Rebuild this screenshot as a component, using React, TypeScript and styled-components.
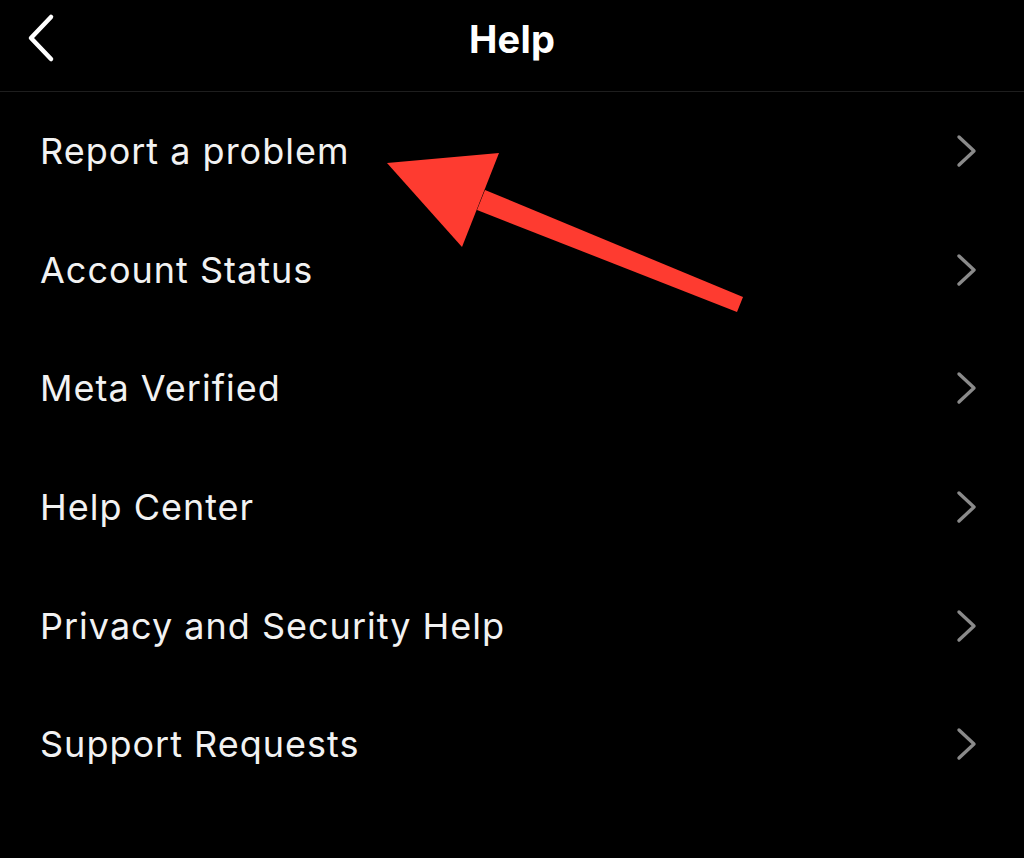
import React from 'react';
import styled, { createGlobalStyle } from 'styled-components';

const GlobalStyle = createGlobalStyle`
  html, body {
    margin: 0;
    padding: 0;
    background: #000;
  }
  body {
    font-family: Inter, "Noto Sans", "Liberation Sans", sans-serif;
    color: #f5f5f5;
  }
`;

const Screen = styled.div`
  position: relative;
  width: 1024px;
  height: 858px;
  background: #000;
  overflow: hidden;
`;

const Header = styled.div`
  position: relative;
  height: 91px;
  display: flex;
  align-items: center;
  justify-content: center;
  border-bottom: 1px solid #1e1e1e;
`;

const BackButton = styled.div`
  position: absolute;
  left: 26px;
  top: 12px;
  width: 30px;
  height: 52px;
  display: flex;
`;

const Title = styled.h1`
  margin: 0 0 14px;
  font-size: 38px;
  font-weight: 700;
  letter-spacing: 0.2px;
  color: #fff;
`;

const List = styled.div`
  display: flex;
  flex-direction: column;
`;

const Row = styled.div`
  height: 118.6px;
  display: flex;
  align-items: center;
  justify-content: space-between;
  padding: 0 46px 0 40px;
`;

const Label = styled.span`
  font-size: 36px;
  font-weight: 400;
  color: #f2f2f2;
  letter-spacing: 1px;
`;

const Chevron = styled.svg`
  width: 22px;
  height: 34px;
  display: block;
`;

const Arrow = styled.svg`
  position: absolute;
  left: 0;
  top: 0;
  pointer-events: none;
`;

const items = [
  'Report a problem',
  'Account Status',
  'Meta Verified',
  'Help Center',
  'Privacy and Security Help',
  'Support Requests',
];

function App() {
  return (
    <Screen>
      <GlobalStyle />
      <Header>
        <BackButton>
          <svg width="30" height="52" viewBox="0 0 30 52">
            <path d="M25 5 L5 26 L25 47" fill="none" stroke="#fff" strokeWidth="4.5" strokeLinecap="round" strokeLinejoin="round" />
          </svg>
        </BackButton>
        <Title>Help</Title>
      </Header>
      <List>
        {items.map(label => (
          <Row key={label}>
            <Label>{label}</Label>
            <Chevron viewBox="0 0 22 34">
              <path d="M3 3 L18 17 L3 31" fill="none" stroke="#8a8a8a" strokeWidth="3.4" strokeLinecap="round" strokeLinejoin="round" />
            </Chevron>
          </Row>
        ))}
      </List>
      <Arrow width="1024" height="858" viewBox="0 0 1024 858">
        <polygon points="387,163 499,153 462,247" fill="#fe3b30" />
        <polygon points="485,190 743,297 737,312 477,210" fill="#fe3b30" />
      </Arrow>
    </Screen>
  );
}

export default App;
